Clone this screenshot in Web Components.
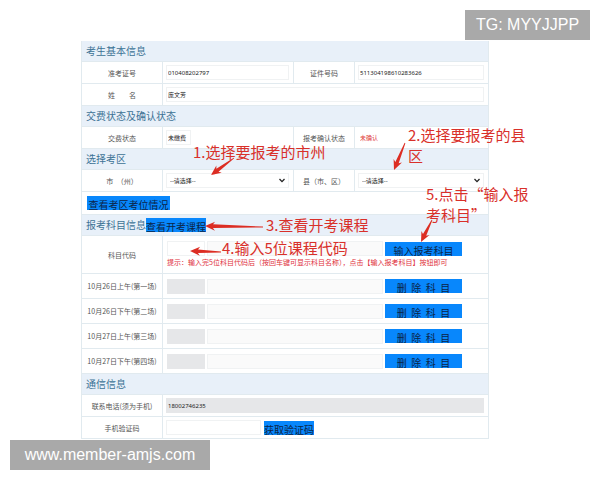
<!DOCTYPE html>
<html lang="zh-CN">
<head>
<meta charset="utf-8">
<title>考生报考信息</title>
<style>
  :root {
    --font: "Noto Sans", "Noto Sans CJK SC", sans-serif;
    --font-cjk: "Noto Sans CJK SC", sans-serif;
    --line: #e1eaef;
    --band: #e8f0f9;
    --title: #3c7295;
    --blue: #0887fc;
    --red: #d9302a;
    --grey: #e6e7e9;
  }

  body {
    margin: 0;
    min-height: 480px;
    position: relative;
    background: #fff;
    font-family: var(--font-cjk);
  }
</style>
</head>
<body>
<exam-page></exam-page>

<script>
const define = (name, markup, setup) => {
  const template = document.createElement("template");
  template.innerHTML = markup;

  customElements.define(name, class extends HTMLElement {
    constructor() {
      super();
      this.attachShadow({ mode: "open" });
      this.shadowRoot.appendChild(template.content.cloneNode(true));
    }

    connectedCallback() {
      if (setup) setup(this, this.shadowRoot);
    }
  });
};

/* Blue band with a section title, optional button in the slot */
define("section-title", `
  <style>
    :host {
      display: flex;
      align-items: center;
      gap: 0;
      height: 20px;
      padding-left: 4px;
      border-bottom: 1px solid var(--line);
      background: var(--band);
    }

    h2 {
      margin: 0;
      color: var(--title);
      font-size: 10px;
      font-weight: 400;
      line-height: 20px;
    }
  </style>
  <h2></h2>
  <slot></slot>
`, (host, root) => {
  root.querySelector("h2").textContent = host.getAttribute("text");
});

/* One line of the form: one or two fields side by side */
define("form-row", `
  <style>
    :host {
      display: grid;
      grid-template-columns: 1fr;
      min-height: 21px;
      border-bottom: 1px solid var(--line);
      background: #fff;
    }

    :host([split]) {
      grid-template-columns: 211fr 195fr;
    }

    :host([tall]) {
      min-height: 24px;
    }

    :host([hint]) {
      min-height: 37px;
    }

    :host([actions]) {
      display: flex;
      align-items: center;
      min-height: 22px;
      padding-left: 5px;
    }
  </style>
  <slot></slot>
`);

const FIELD_STYLE = `
  <style>
    :host {
      display: grid;
      grid-template-columns: var(--label-width, 81px) 1fr;
    }

    :host([second]) {
      --label-width: 61px;
      border-left: 1px solid var(--line);
    }

    .label {
      display: flex;
      align-items: center;
      justify-content: center;
      border-right: 1px solid var(--line);
      color: #555;
      font-size: 7px;
      line-height: 10px;
      white-space: pre;
    }

    .value {
      display: flex;
      align-items: center;
      padding: 0 4px 0 3px;
      min-width: 0;
    }

    input,
    select {
      box-sizing: border-box;
      width: 100%;
      height: 15px;
      margin: 0;
      padding: 0 1px;
      border: 1px solid #f0f2f3;
      border-radius: 0;
      outline: 0;
      background: #fff;
      color: #222;
      font: 6px var(--font);
    }
  </style>
`;

define("text-field", FIELD_STYLE + `
  <style>
    :host([grey]) input {
      background: var(--grey);
      border-color: var(--grey);
    }

    :host([short]) input {
      width: 25px;
    }

    :host([alert]) input {
      border-color: transparent;
      color: #e03a3a;
    }

    :host([code]) input {
      width: 95px;
      margin-right: 3px;
    }
  </style>
  <label class="label" for="box"></label>
  <div class="value"><input id="box" type="text"><slot></slot></div>
`, (host, root) => {
  root.querySelector("label").textContent = host.getAttribute("label");
  root.querySelector("input").value = host.getAttribute("value") || "";
});

define("select-field", FIELD_STYLE + `
  <style>
    .wrap {
      position: relative;
      width: 100%;
      line-height: 0;
    }

    select {
      appearance: none;
      padding: 0 3px;
    }

    svg {
      position: absolute;
      right: 4px;
      top: 5px;
      width: 6px;
      height: 5px;
      pointer-events: none;
    }
  </style>
  <label class="label" for="box"></label>
  <div class="value">
    <div class="wrap">
      <select id="box"><option>--请选择--</option></select>
      <svg viewBox="0 0 6 5"><path d="M.5 1 3 3.6 5.5 1" fill="none" stroke="#222" stroke-width="1.3"/></svg>
    </div>
  </div>
`, (host, root) => {
  root.querySelector("label").textContent = host.getAttribute("label");
});

/* Course code plus course name, with a button after them */
define("subject-field", FIELD_STYLE + `
  <style>
    .value {
      flex-wrap: wrap;
      align-content: center;
      gap: 0 2px;
      padding-left: 4px;
    }

    .code {
      width: 38px;
    }

    .name {
      flex: 1;
      background: #fafafa;
    }

    :host([locked]) .code {
      background: var(--grey);
      border-color: var(--grey);
    }

    .action {
      width: 99px;
    }

    p {
      width: 100%;
      margin: 0;
      color: #e0303c;
      font-size: 7px;
      line-height: 12px;
      white-space: nowrap;
    }

    p:empty {
      display: none;
    }
  </style>
  <label class="label" for="box"></label>
  <div class="value">
    <input class="code" id="box" type="text">
    <input class="name" type="text" aria-label="科目名称" readonly>
    <div class="action"><slot></slot></div>
    <p></p>
  </div>
`, (host, root) => {
  root.querySelector("label").textContent = host.getAttribute("label");
  root.querySelector("p").textContent = host.getAttribute("hint-text") || "";
});

define("blue-button", `
  <style>
    :host {
      display: block;
    }

    button {
      display: block;
      box-sizing: border-box;
      height: 14px;
      margin: 0;
      padding: 4px 0 0;
      border: 0;
      overflow: hidden;
      background: var(--blue);
      color: #0b2447;
      font: 10px/10px var(--font-cjk);
      white-space: nowrap;
    }

    :host([wide]) button {
      width: 77px;
    }

    :host([padded]) button {
      width: 83px;
    }
  </style>
  <button type="button"><slot></slot></button>
`);

define("guide-note", `
  <style>
    :host {
      position: absolute;
      color: var(--red);
      font-size: 15px;
      line-height: 21px;
      white-space: nowrap;
    }
  </style>
  <slot></slot>
`);

/* Arrows taper from a thin tail to a solid head */
define("guide-arrows", `
  <style>
    :host {
      position: absolute;
      left: 0;
      top: 0;
      pointer-events: none;
    }

    svg {
      display: block;
      fill: #dc2d23;
    }
  </style>
  <svg width="600" height="300"></svg>
`, (host, root) => {
  const arrows = [
    [234, 158, 211, 175],
    [405, 143, 394, 170],
    [263, 227, 205, 226],
    [221, 252, 190, 251],
    [432, 220, 421, 242],
  ];
  root.querySelector("svg").innerHTML = arrows.map(([x1, y1, x2, y2]) => {
    const length = Math.hypot(x2 - x1, y2 - y1);
    const angle = Math.atan2(y2 - y1, x2 - x1) * 180 / Math.PI;
    const base = length - 10;
    return `<path transform="translate(${x1} ${y1}) rotate(${angle})"
      d="M0 -.4 L${base + 2} -1.8 L${base} -4.5 L${length} 0 L${base} 4.5 L${base + 2} 1.8 L0 .4Z"/>`;
  }).join("");
});

define("corner-tag", `
  <style>
    :host {
      position: absolute;
      padding: 0 10px;
      background: #a9a9a9;
      color: #fff;
      font: 16px/30px "Liberation Sans", sans-serif;
      text-align: center;
      white-space: nowrap;
    }
  </style>
  <slot></slot>
`);

define("exam-page", `
  <style>
    :host {
      display: block;
      padding-top: 41px;
    }

    form {
      width: 68%;
      margin-left: 13.5%;
      box-sizing: border-box;
      border: solid var(--line);
      border-width: 0 1px;
    }

    .note-city { left: 193px; top: 141px; }
    .note-county { left: 408px; top: 124px; }
    .note-view { left: 266px; top: 214px; }
    .note-code { left: 222px; top: 237px; }
    .note-submit { left: 426px; top: 183px; }
    .tag-top { right: 10px; top: 10px; width: 105px; }
    .tag-bottom { left: 10px; top: 440px; width: 180px; }
  </style>

  <form>
    <section-title text="考生基本信息"></section-title>
    <form-row split>
      <text-field label="准考证号" value="010408202797"></text-field>
      <text-field second label="证件号码" value="511304198610283626"></text-field>
    </form-row>
    <form-row>
      <text-field label="姓　　名" value="庞文芳"></text-field>
    </form-row>

    <section-title text="交费状态及确认状态"></section-title>
    <form-row split>
      <text-field short label="交费状态" value="未缴费"></text-field>
      <text-field second alert label="报考确认状态" value="未确认"></text-field>
    </form-row>

    <section-title text="选择考区"></section-title>
    <form-row split>
      <select-field label="市　（州）"></select-field>
      <select-field second label="县（市、区）"></select-field>
    </form-row>
    <form-row actions>
      <blue-button padded>查看考区考位情况</blue-button>
    </form-row>

    <section-title text="报考科目信息"><blue-button>查看开考课程</blue-button></section-title>
    <form-row hint>
      <subject-field label="科目代码" hint-text="提示：输入完5位科目代码后（按回车键可显示科目名称），点击【输入报考科目】按钮即可">
        <blue-button wide>输入报考科目</blue-button>
      </subject-field>
    </form-row>
    <form-row tall>
      <subject-field locked label="10月26日上午(第一场)"><blue-button wide>删&nbsp;&nbsp;除&nbsp;&nbsp;科&nbsp;&nbsp;目</blue-button></subject-field>
    </form-row>
    <form-row tall>
      <subject-field locked label="10月26日下午(第二场)"><blue-button wide>删&nbsp;&nbsp;除&nbsp;&nbsp;科&nbsp;&nbsp;目</blue-button></subject-field>
    </form-row>
    <form-row tall>
      <subject-field locked label="10月27日上午(第三场)"><blue-button wide>删&nbsp;&nbsp;除&nbsp;&nbsp;科&nbsp;&nbsp;目</blue-button></subject-field>
    </form-row>
    <form-row tall>
      <subject-field locked label="10月27日下午(第四场)"><blue-button wide>删&nbsp;&nbsp;除&nbsp;&nbsp;科&nbsp;&nbsp;目</blue-button></subject-field>
    </form-row>

    <section-title text="通信信息"></section-title>
    <form-row>
      <text-field grey label="联系电话(须为手机)" value="18002746235"></text-field>
    </form-row>
    <form-row>
      <text-field code label="手机验证码"><blue-button>获取验证码</blue-button></text-field>
    </form-row>
  </form>

  <guide-arrows></guide-arrows>
  <guide-note class="note-city">1.选择要报考的市州</guide-note>
  <guide-note class="note-county">2.选择要报考的县<br>区</guide-note>
  <guide-note class="note-view">3.查看开考课程</guide-note>
  <guide-note class="note-code">4.输入5位课程代码</guide-note>
  <guide-note class="note-submit">5.点击“输入报<br>考科目”</guide-note>

  <corner-tag class="tag-top">TG: MYYJJPP</corner-tag>
  <corner-tag class="tag-bottom">www.member-amjs.com</corner-tag>
`);
</script>
</body>
</html>
